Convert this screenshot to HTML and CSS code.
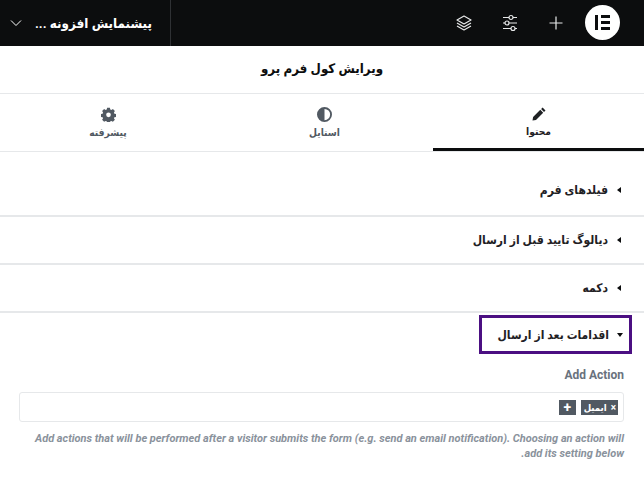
FILE: index.html
```html
<!DOCTYPE html>
<html lang="fa">
<head>
<meta charset="utf-8">
<title>ویرایش کول فرم پرو</title>
<link rel="stylesheet" href="styles.css">
</head>
<body>
<header class="topbar">
  <div class="preview">
    <svg class="chev" width="12" height="8" viewBox="0 0 12 8"><path d="M1 1.5l5 5 5-5" fill="none" stroke="#fff" stroke-width="1"/></svg>
    <span class="preview-title" dir="rtl">پیشنمایش افزونه ...</span>
  </div>
  <div class="tools">
    <svg class="tool" width="18" height="18" viewBox="0 0 18 18" fill="none" stroke="#e8e9ea" stroke-width="1.2" stroke-linejoin="round"><path d="M9 2l7 4-7 4-7-4z"/><path d="M2 9l7 4 7-4"/><path d="M2 12l7 4 7-4"/></svg>
    <svg class="tool" width="18" height="18" viewBox="0 0 18 18" fill="none" stroke="#e8e9ea" stroke-width="1.2"><path d="M2 3.5h6M12 3.5h4M2 9h2M8 9h8M2 14.500h8M14 14.500h2"/><circle cx="10" cy="3.500" r="2"/><circle cx="6" cy="9" r="2"/><circle cx="12" cy="14.500" r="2"/></svg>
    <svg class="tool tool-plus" width="18" height="18" viewBox="0 0 18 18" fill="none" stroke="#e8e9ea" stroke-width="1.200"><path d="M9 2.500v13M2.500 9h13"/></svg>
    <svg class="logo" width="35" height="35" viewBox="0 0 35 35"><circle cx="17.500" cy="17.500" r="17.500" fill="#fff"/><path d="M10 10h3v15h-3zM16 10h9v3h-9zM16 16h9v3h-9zM16 22h9v3h-9z" fill="#0c0d0e"/></svg>
  </div>
</header>
<main dir="rtl">
  <h1 class="title">ویرایش کول فرم پرو</h1>
  <nav class="tabs">
    <div class="tab tab-active">
      <svg width="14" height="14" viewBox="0 0 14 14"><path d="M10.600.500l2.900 2.900-1.500 1.500-2.900-2.900zM8.300 2.800l2.900 2.900-7.200 7.200-3.500.6.600-3.500z" fill="#1f2124"/></svg>
      <span>محتوا</span>
    </div>
    <div class="tab">
      <svg width="15" height="15" viewBox="0 0 16 16"><circle cx="8" cy="8" r="7" fill="none" stroke="#515962" stroke-width="2"/><path d="M8 1a7 7 0 0 0 0 14z" fill="#515962"/></svg>
      <span>استایل</span>
    </div>
    <div class="tab">
      <svg width="15" height="15" viewBox="0 0 16 16"><path fill="#515962" fill-rule="evenodd" d="M6.500 0.800h3l.4 1.900 1.200.5 1.600-1 2.100 2.100-1 1.600.5 1.200 1.900.4v3l-1.900.4-.5 1.200 1 1.600-2.100 2.100-1.600-1-1.200.5-.4 1.900h-3l-.4-1.900-1.200-.5-1.600 1-2.100-2.100 1-1.600-.5-1.200-1.900-.4v-3l1.900-.4.5-1.200-1-1.600 2.100-2.100 1.600 1 1.200-.5zM8 5.800a2.500 2.500 0 1 0 0 5 2.500 2.500 0 0 0 0-5z"/></svg>
      <span>پیشرفته</span>
    </div>
  </nav>
  <section class="sec sec-first"><span class="arrow arrow-left"></span><span class="sec-name">فیلدهای فرم</span></section>
  <section class="sec"><span class="arrow arrow-left"></span><span class="sec-name">دیالوگ تایید قبل از ارسال</span></section>
  <section class="sec"><span class="arrow arrow-left"></span><span class="sec-name">دکمه</span></section>
  <div class="open-wrap">
    <div class="open-sec"><span class="arrow arrow-down"></span><span class="sec-name">اقدامات بعد از ارسال</span></div>
  </div>
  <div class="control">
    <label class="label" dir="ltr">Add Action</label>
    <div class="select">
      <span class="chip"><span class="chip-x">×</span><span>ایمیل</span></span>
      <span class="plus">+</span>
    </div>
    <p class="desc">Add actions that will be performed after a visitor submits the form (e.g. send an email notification). Choosing an action will add its setting below.</p>
  </div>
</main>
</body>
</html>
```
FILE: styles.css
```css
* { box-sizing: border-box; }
html, body { margin: 0; padding: 0; }
body { width: 644px; height: 502px; overflow: hidden; background: #fff; font-family: Roboto, "DejaVu Sans Condensed", "DejaVu Sans", sans-serif; color: #0c0d0e; }
.topbar { height: 46px; background: #0c0d0e; display: flex; direction: ltr; }
.preview { width: 171px; border-right: 1px solid #2f3134; display: flex; align-items: center; padding: 0 18px 0 10px; justify-content: space-between; }
.preview-title { color: #fff; font-size: 13.300px; font-weight: 700; white-space: nowrap; }
.chev { flex: none; }
.tools { flex: 1; display: flex; align-items: center; justify-content: flex-end; padding-right: 24px; }
.tool { margin-right: 28px; }
.tool-plus { margin-right: 20px; }
.logo { margin-bottom: 1px; }
.title { margin: 0; height: 48px; border-bottom: 1px solid #e6e8ea; padding-bottom: 3px; display: flex; align-items: center; justify-content: center; font-size: 13.200px; font-weight: 700; }
.tabs { display: grid; grid-template-columns: 211px 217px 216px; height: 58px; border-bottom: 1px solid #e6e8ea; }
.tab { display: flex; flex-direction: column; align-items: center; padding-top: 13px; gap: 5px; font-size: 10.200px; font-weight: 700; color: #515962; height: 57px; }
.tab-active { color: #1f2124; border-bottom: 3px solid #0c0d0e; }
.sec { height: 48px; border-bottom: 2px solid #e6e8ea; display: flex; align-items: center; padding-right: 23px; gap: 9px; }
.sec-first { height: 65px; padding-top: 12px; }
.sec-name { font-size: 12px; font-weight: 700; color: #1f2124; white-space: nowrap; }
.arrow { width: 0; height: 0; border-style: solid; flex: none; }
.arrow-left { border-width: 3px 4px 3px 0; border-color: transparent #0c0d0e transparent transparent; }
.arrow-down { border-width: 4px 3px 0 3px; border-color: #0c0d0e transparent transparent transparent; }
.open-wrap { padding: 2px 12px 0 0; display: flex; }
.open-sec { width: 153px; height: 39px; border: 3px solid #4b0f82; display: flex; align-items: center; padding-right: 6px; gap: 8px; }
.control { padding: 14px 20px 0 19px; }
.label { display: block; font-size: 12px; font-weight: 700; color: #69727d; text-align: right; line-height: 14px; }
.select { margin-top: 10px; height: 30px; border: 1px solid #e6e8ea; border-radius: 3px; display: flex; align-items: center; padding: 0 5px; gap: 5px; }
.chip { background: #515962; color: #fff; font-size: 9.500px; font-weight: 700; height: 15px; display: flex; align-items: center; padding: 0 2px 0 3px; gap: 4px; }
.chip-x { font-size: 10px; }
.plus { background: #515962; color: #fff; width: 17px; height: 15px; display: flex; align-items: center; justify-content: center; font-size: 14px; font-weight: 700; }
.desc { margin: 9px 0 0; font-size: 11px; font-style: italic; font-weight: 700; line-height: 15px; color: #8a929c; }
```
